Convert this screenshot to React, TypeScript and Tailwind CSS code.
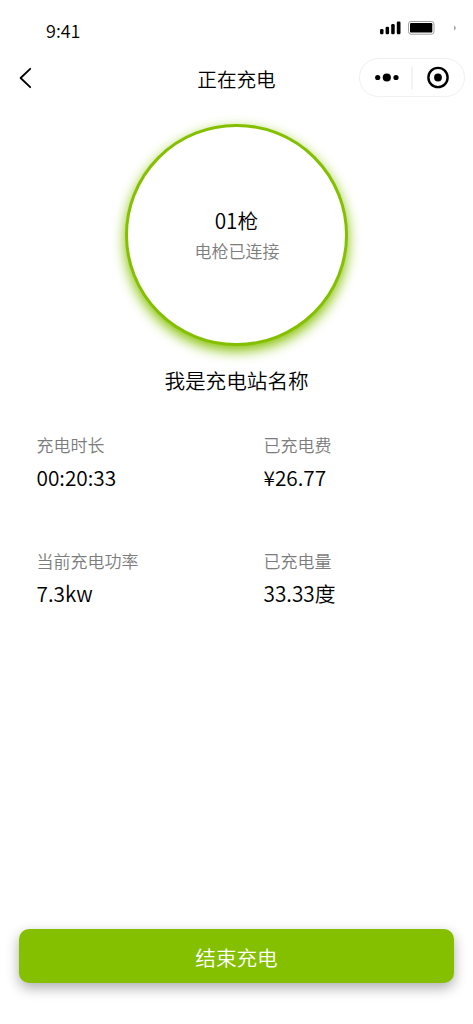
type StatProps = {
  label: string;
  value: string;
};

const Stat = ({ label, value }: StatProps) => {
  return (
    <div className="flex flex-col">
      <span className="text-[17px] leading-6 text-[#7c7c7c]">{label}</span>
      <span className="mt-1 text-[20.800px] leading-8 text-black">{value}</span>
    </div>
  );
};

const StatusBar = () => {
  return (
    <div className="flex h-[57px] items-start pl-[46px] pr-[16px]">
      <span className="mt-[18px] text-[18px] leading-6">9:41</span>
      <svg className="ml-auto mt-[20px]" width="78" height="16" viewBox="0 0 78 16" fill="none">
        <rect x="1" y="9" width="3.500" height="5.200" rx="1.200" fill="black" />
        <rect x="6.600" y="6.800" width="3.500" height="7.400" rx="1.200" fill="black" />
        <rect x="12.200" y="4" width="3.500" height="10.200" rx="1.200" fill="black" />
        <rect x="17.800" y="1.500" width="3.700" height="12.700" rx="1.200" fill="black" />
        <rect x="29.500" y="1.500" width="25.500" height="12.700" rx="2.500" stroke="#a0a0a0" />
        <rect x="31" y="3" width="22.300" height="9.600" rx="1.200" fill="black" />
        <path d="M75.300 5.500C77 7 77 9 75.300 10.500Z" fill="#777" />
      </svg>
    </div>
  );
};

const NavBar = () => {
  return (
    <div className="grid h-[41px] grid-cols-[1fr_auto_1fr] items-center px-[8px]">
      <svg className="ml-[10px]" width="14" height="22" viewBox="0 0 14 22" fill="none">
        <path
          d="M12.200 1.800L2.600 11L12.200 20.200"
          stroke="black"
          strokeWidth="1.800"
          strokeLinecap="round"
          strokeLinejoin="round"
        />
      </svg>
      <h1 className="mt-[2px] text-[19.600px] leading-7">正在充电</h1>
      <div className="ml-auto flex h-[39px] w-[106px] items-center rounded-full border border-[#f0f0f0]">
        <svg width="104" height="37" viewBox="0 0 104 37">
          <circle cx="17.700" cy="18.500" r="2.600" />
          <circle cx="26.800" cy="18.500" r="4.100" />
          <circle cx="36" cy="18.500" r="2.600" />
          <path d="M52 7.500V30.500" stroke="#e8e8e8" />
          <circle cx="78" cy="18.500" r="9.600" fill="none" stroke="black" strokeWidth="2.400" />
          <circle cx="78" cy="18.500" r="3.900" />
        </svg>
      </div>
    </div>
  );
};

export default function App() {
  return (
    <div className="flex h-[1024px] w-[473px] flex-col overflow-hidden bg-white font-['Noto_Sans_CJK_SC',sans-serif] font-[350] text-black">
      <StatusBar />
      <NavBar />
      <div className="mx-auto mt-[26px] flex h-[222px] w-[223px] flex-col items-center rounded-full border-[3px] border-[#84c000] bg-white pt-[77px] shadow-[0_5px_13px_#84c000]">
        <span className="text-[20.800px] leading-8">01枪</span>
        <span className="ml-px mt-px text-[17px] leading-7 text-[#7c7c7c]">电枪已连接</span>
      </div>
      <h2 className="mt-[18px] text-center text-[20.600px] leading-8">我是充电站名称</h2>
      <div className="mt-[37px] grid grid-cols-[227px_1fr] gap-y-[56px] pl-[36.500px]">
        <Stat label="充电时长" value="00:20:33" />
        <Stat label="已充电费" value="¥26.77" />
        <Stat label="当前充电功率" value="7.3kw" />
        <Stat label="已充电量" value="33.33度" />
      </div>
      <button className="mx-[19px] mb-[41px] mt-auto h-[54px] rounded-[10px] bg-[#84c000] pt-0.5 text-[20.600px] text-white shadow-[0_5px_13px_rgba(0,0,0,0.32)]">
        结束充电
      </button>
    </div>
  );
}
